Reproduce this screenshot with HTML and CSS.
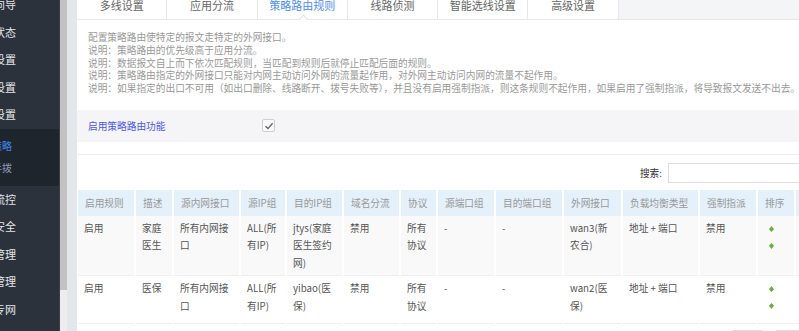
FILE: index.html
```html
<!DOCTYPE html>
<html>
<head>
    <meta charset="UTF-8">
    <title>策略路由规则</title>
    <link rel="stylesheet" href="styles.css">
</head>

<body>
    <div class="layout">
        <!-- 左侧菜单 -->
        <div class="sidebar">
            <ul class="menu">
                <li>向导</li>
                <li>状态</li>
                <li>设置</li>
                <li>设置</li>
                <li>设置</li>
                <li class="submenu">
                    <ul>
                        <li class="active">策略</li>
                        <li>手拨</li>
                    </ul>
                </li>
                <li>流控</li>
                <li>安全</li>
                <li>管理</li>
                <li>管理</li>
                <li>专网</li>
            </ul>
        </div>
        <div class="scrollbar"><div class="thumb"></div></div>

        <!-- 主内容 -->
        <div class="main">
            <ul class="tabs">
                <li>多线设置</li>
                <li>应用分流</li>
                <li class="active">策略路由规则</li>
                <li>线路侦测</li>
                <li>智能选线设置</li>
                <li>高级设置</li>
            </ul>

            <div class="intro">
                <p>配置策略路由使特定的报文走特定的外网接口。</p>
                <p>说明：策略路由的优先级高于应用分流。</p>
                <p>说明：数据报文自上而下依次匹配规则，当匹配到规则后就停止匹配后面的规则。</p>
                <p>说明：策略路由指定的外网接口只能对内网主动访问外网的流量起作用，对外网主动访问内网的流量不起作用。</p>
                <p>说明：如果指定的出口不可用（如出口删除、线路断开、拨号失败等），并且没有启用强制指派，则这条规则不起作用，如果启用了强制指派，将导致报文发送不出去。</p>
            </div>

            <div class="switch-row">
                <label>启用策略路由功能</label>
                <span class="checkbox">
                    <svg width="10" height="10" viewBox="0 0 10 10"><path d="M1.5 5.2 L4 7.6 L8.6 2.2" fill="none" stroke="#666" stroke-width="1.4"/></svg>
                </span>
            </div>

            <div class="toolbar">
                <span class="search-label">搜索:</span>
                <input type="text" class="search-input">
            </div>

            <table class="rules">
                <colgroup>
                    <col style="width:57px"><col style="width:38px"><col style="width:67px"><col style="width:46px">
                    <col style="width:57px"><col style="width:57px"><col style="width:37px"><col style="width:58px">
                    <col style="width:68px"><col style="width:59px"><col style="width:77px"><col style="width:58px">
                    <col style="width:38px"><col style="width:80px">
                </colgroup>
                <thead>
                    <tr>
                        <th>启用规则</th><th>描述</th><th>源内网接口</th><th>源IP组</th><th>目的IP组</th><th>域名分流</th><th>协议</th>
                        <th>源端口组</th><th>目的端口组</th><th>外网接口</th><th>负载均衡类型</th><th>强制指派</th><th>排序</th><th>操作</th>
                    </tr>
                </thead>
                <tbody>
                    <tr>
                        <td>启用</td><td>家庭医生</td><td>所有内网接口</td><td>ALL(所有IP)</td><td>jtys(家庭医生签约网)</td><td>禁用</td><td>所有协议</td>
                        <td>-</td><td>-</td><td>wan3(新农合)</td><td>地址 + 端口</td><td>禁用</td>
                        <td class="sort">
                            <svg class="arrow" width="5" height="6" viewBox="0 0 5 6"><path d="M2.5 0 L5 3.2 L2.5 6 L0 3.2 Z" fill="#6aae3c"/></svg>
                            <svg class="arrow" width="5" height="6" viewBox="0 0 5 6"><path d="M2.5 0 L5 2.8 L2.5 6 L0 2.8 Z" fill="#6aae3c"/></svg>
                        </td>
                        <td></td>
                    </tr>
                    <tr>
                        <td>启用</td><td>医保</td><td>所有内网接口</td><td>ALL(所有IP)</td><td>yibao(医保)</td><td>禁用</td><td>所有协议</td>
                        <td>-</td><td>-</td><td>wan2(医保)</td><td>地址 + 端口</td><td>禁用</td>
                        <td class="sort">
                            <svg class="arrow" width="5" height="6" viewBox="0 0 5 6"><path d="M2.5 0 L5 3.2 L2.5 6 L0 3.2 Z" fill="#6aae3c"/></svg>
                            <svg class="arrow" width="5" height="6" viewBox="0 0 5 6"><path d="M2.5 0 L5 2.8 L2.5 6 L0 2.8 Z" fill="#6aae3c"/></svg>
                        </td>
                        <td></td>
                    </tr>
                </tbody>
            </table>

            <div class="pager">
                <span class="page-btn"></span>
                <span class="page-btn"></span>
            </div>
        </div>
    </div>
</body>
</html>
```

FILE: styles.css
```css
* {
    box-sizing: border-box;
}
html, body {
    margin: 0;
    padding: 0;
    height: 331px;
    overflow: hidden;
}
body {
    font-family: "Noto Sans CJK SC", "Liberation Sans", sans-serif;
    background-color: #E3E7EC;
}
ul {
    list-style: none;
    margin: 0;
    padding: 0;
}
.layout {
    display: flex;
    height: 331px;
    overflow: hidden;
}
/* 左侧菜单 */
.sidebar {
    width: 59px;
    flex: 0 0 59px;
    background-color: #2B323B;
    overflow: hidden;
}
.menu {
    margin-top: -9px;
}
.menu > li {
    height: 27.5px;
    line-height: 27.5px;
    font-size: 11px;
    color: #E2E4E7;
    text-indent: -6px;
    white-space: nowrap;
}
.menu > li.submenu {
    height: auto;
    background-color: #1F252C;
    padding: 6px 0 7px;
    text-indent: 0;
}
.submenu li {
    height: 22px;
    line-height: 22px;
    font-size: 10px;
    color: #8C9BB4;
    text-indent: -8px;
}
.submenu li.active {
    color: #3F8CF5;
}
.scrollbar {
    flex: 0 0 8px;
    background-color: #EDEDED;
    border-left: 1px solid #3A3F45;
}
.scrollbar .thumb {
    height: 290px;
    background-color: #C2C2C2;
}
/* 主内容 */
.main {
    flex: 1;
    min-width: 0;
    margin-left: 10px;
    background-color: #FFFFFF;
    overflow: hidden;
}
.tabs {
    display: flex;
    margin-top: -9px;
    height: 29px;
    background-color: #F4F5F7;
    border-bottom: 1px solid #E6E7EA;
}
.tabs li {
    position: relative;
    flex: 0 0 90.3px;
    height: 28px;
    line-height: 28px;
    text-align: center;
    font-size: 11px;
    color: #666;
    background-color: #FFFFFF;
    border-right: 1px solid #E8E8E8;
}
.tabs li.active {
    color: #4B8DEE;
}
.tabs li.active::after {
    content: "";
    position: absolute;
    left: 42px;
    bottom: -4px;
    width: 6px;
    height: 6px;
    background-color: #FFFFFF;
    border-top: 1px solid #E0E2E6;
    border-left: 1px solid #E0E2E6;
    transform: rotate(45deg);
}
.intro {
    padding: 11px 0 0 11px;
}
.intro p {
    margin: 0;
    font-size: 9.7px;
    line-height: 12.8px;
    color: #999;
    white-space: nowrap;
}
.switch-row {
    display: flex;
    align-items: center;
    height: 32px;
    margin-top: 15px;
    padding-left: 11px;
    background-color: #F5F5F7;
}
.switch-row label {
    width: 174px;
    font-size: 9.7px;
    color: #4D58EE;
}
.checkbox {
    display: flex;
    align-items: center;
    justify-content: center;
    width: 13px;
    height: 13px;
    border: 1px solid #CFCFCF;
    border-radius: 2px;
    background-color: #FAFAFA;
}
.toolbar {
    display: flex;
    justify-content: flex-end;
    align-items: center;
    margin-top: 12px;
    border-top: 1px solid #EEEEEE;
    padding: 8px 0 7px;
}
.search-label {
    font-size: 9.7px;
    color: #333;
    margin-right: 6px;
}
.search-input {
    width: 150px;
    height: 20px;
    margin-right: -19px;
    border: 1px solid #DDDDDD;
    background-color: #FFFFFF;
    outline: none;
}
/* 规则表格 */
.rules {
    margin-left: 1px;
    width: 797px;
    table-layout: fixed;
    border-collapse: collapse;
    font-size: 9.7px;
}
.rules th {
    height: 26px;
    padding: 0 7px;
    text-align: left;
    font-weight: normal;
    color: #999;
    background-color: #E4F0FA;
    border-right: 2px solid #FFFFFF;
    white-space: nowrap;
}
.rules td {
    padding: 4px 6px 3px;
    line-height: 17.5px;
    vertical-align: top;
    color: #555;
    border-right: 2px solid #FFFFFF;
    border-bottom: 1px solid #EFEFEF;
}
.rules tbody tr:nth-child(odd) td {
    background-color: #F9F9F9;
}
.rules td.sort {
    padding-left: 11px;
}
.rules .arrow {
    display: block;
    margin: 6px 0 11px;
}
.pager {
    display: flex;
    justify-content: flex-end;
    gap: 11px;
    margin-top: 6px;
    margin-right: -9px;
}
.page-btn {
    width: 33px;
    height: 24px;
    border: 1px solid #DDDDDD;
    border-radius: 2px;
}
```
